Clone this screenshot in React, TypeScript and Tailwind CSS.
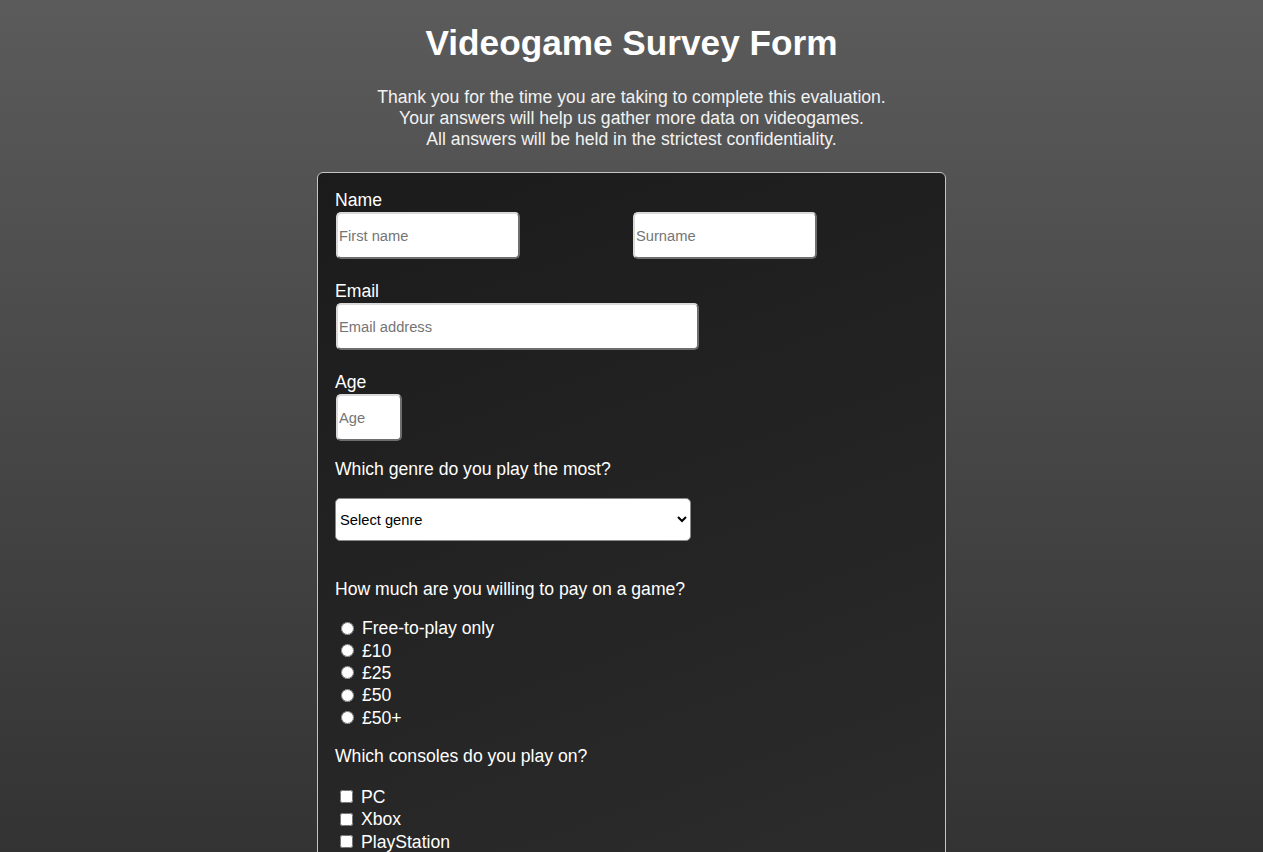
const inputClass =
  'ml-px h-[47px] rounded-[5px] border-2 border-t-[#d9d9d9] border-l-[#d9d9d9] border-r-[#6e6e6e] border-b-[#6e6e6e] bg-white px-[1px] text-[14.7px] text-black placeholder:text-[#757575] outline-none'

const prices = ['Free-to-play only', '£10', '£25', '£50', '£50+']
const consoles = ['PC', 'Xbox', 'PlayStation', 'Nintendo', 'Mobile']

export default function App() {
  return (
    <div className="min-h-screen bg-fixed bg-[linear-gradient(to_bottom,#5b5b5b,#333333)] pb-10 font-['Liberation_Sans',Arial,sans-serif] text-white">
      <h1 className="pt-[23px] text-center text-[35.2px] font-bold leading-[40px]">
        Videogame Survey Form
      </h1>
      <p className="mt-[24px] text-center text-[17.6px] leading-[21px] text-[#f2f2f2]">
        Thank you for the time you are taking to complete this evaluation.
        <br />
        Your answers will help us gather more data on videogames.
        <br />
        All answers will be held in the strictest confidentiality.
      </p>

      <form className="mx-auto mt-[22px] w-[629px] rounded-[6px] border border-[#c4c4c4] bg-[linear-gradient(160deg,#1b1b1b_0%,#262626_50%,#323232_100%)] pt-[17px] pr-4 pb-8 pl-[17px] text-[17.6px] leading-[20px]">
        <label className="block">Name</label>
        <div className="mt-[2px] grid grid-cols-2">
          <div>
            <input type="text" placeholder="First name" className={`${inputClass} w-[184px]`} />
          </div>
          <div>
            <input type="text" placeholder="Surname" className={`${inputClass} w-[184px]`} />
          </div>
        </div>

        <label className="mt-[22px] block">Email</label>
        <input type="email" placeholder="Email address" className={`${inputClass} mt-[2px] block w-[363px]`} />

        <label className="mt-[22px] block">Age</label>
        <input type="number" placeholder="Age" className={`${inputClass} mt-[2px] block w-[66px]`} />

        <p className="mt-[18px]">Which genre do you play the most?</p>
        <select
          defaultValue=""
          className="mt-[19px] block h-[43px] w-[356px] rounded-[5px] border border-[#8a8a8a] bg-white pl-0 text-[14.7px] text-black"
        >
          <option value="" disabled>
            Select genre
          </option>
          <option>Action</option>
          <option>RPG</option>
          <option>Strategy</option>
          <option>Sports</option>
        </select>

        <p className="mt-[38px]">How much are you willing to pay on a game?</p>
        <div className="mt-[18px] ml-px">
          {prices.map((p) => (
            <label key={p} className="flex h-[22.4px] items-center">
              <input type="radio" name="price" className="mr-[8px] ml-[5px] h-[13px] w-[13px]" />
              {p}
            </label>
          ))}
        </div>

        <p className="mt-[17.5px]">Which consoles do you play on?</p>
        <div className="mt-[19px] ml-px">
          {consoles.map((c) => (
            <label key={c} className="flex h-[22.5px] items-center">
              <input type="checkbox" className="mr-[8px] ml-[4px] h-[13px] w-[13px]" />
              {c}
            </label>
          ))}
        </div>

        <p className="mt-[18px]">Any other comments?</p>
        <textarea
          placeholder="Enter your comments here..."
          className="mt-[18px] block h-[120px] w-[460px] rounded-[5px] border-2 border-[#6e6e6e] bg-white p-1 text-[14.7px] text-black placeholder:text-[#757575]"
        />
        <button
          type="submit"
          className="mt-6 rounded-[5px] border border-[#c4c4c4] bg-[#3a3a3a] px-6 py-2 text-[17.6px] text-white"
        >
          Submit
        </button>
      </form>
    </div>
  )
}
